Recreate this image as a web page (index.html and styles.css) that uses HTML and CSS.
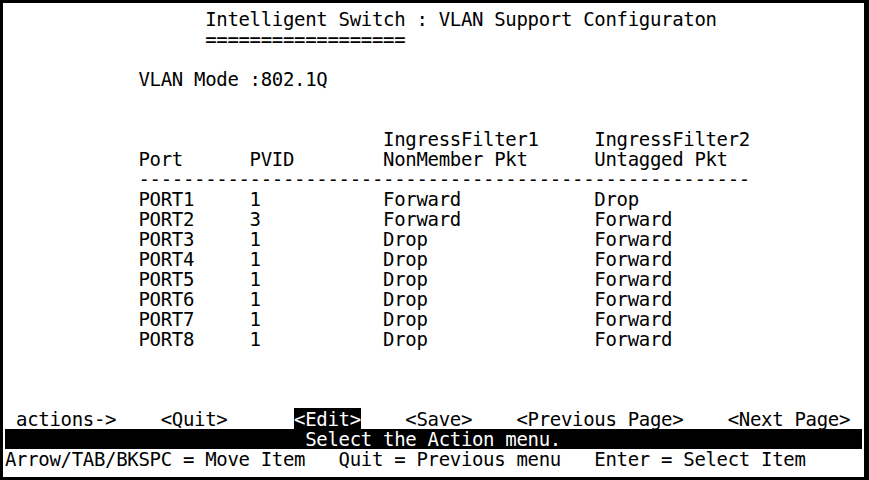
FILE: index.html
```html
<!DOCTYPE html>
<html lang="en">
<head>
<meta charset="utf-8">
<title>Intelligent Switch : VLAN Support Configuraton</title>
<link rel="stylesheet" href="styles.css">
</head>
<body>
<div class="term">
<div class="line">                  Intelligent Switch : VLAN Support Configuraton</div>
<div class="line">                  ==================</div>
<div class="line"> </div>
<div class="line">            VLAN Mode :802.1Q</div>
<div class="line"> </div>
<div class="line"> </div>
<div class="line">                                  IngressFilter1     IngressFilter2</div>
<div class="line">            Port      PVID        NonMember Pkt      Untagged Pkt</div>
<div class="line">            -------------------------------------------------------</div>
<div class="line">            PORT1     1           Forward            Drop</div>
<div class="line">            PORT2     3           Forward            Forward</div>
<div class="line">            PORT3     1           Drop               Forward</div>
<div class="line">            PORT4     1           Drop               Forward</div>
<div class="line">            PORT5     1           Drop               Forward</div>
<div class="line">            PORT6     1           Drop               Forward</div>
<div class="line">            PORT7     1           Drop               Forward</div>
<div class="line">            PORT8     1           Drop               Forward</div>
<div class="line"> </div>
<div class="line"> </div>
<div class="line"> </div>
<div class="line"> actions-&gt;    &lt;Quit&gt;      <span class="sel">&lt;Edit&gt;</span>    &lt;Save&gt;    &lt;Previous Page&gt;    &lt;Next Page&gt;</div>
<div class="line bar">                           Select the Action menu.</div>
<div class="line">Arrow/TAB/BKSPC = Move Item   Quit = Previous menu   Enter = Select Item</div>
</div>
</body>
</html>
```

FILE: styles.css
```css
html, body {
  margin: 0;
  padding: 0;
  background: #ffffff;
}

.term {
  box-sizing: border-box;
  width: 869px;
  height: 480px;
  border-style: solid;
  border-color: #000000;
  border-width: 3px 5px 3px 3px;
  padding: 6px 0 0 2px;
  background: #ffffff;
  color: #000000;
  font-family: "DejaVu Sans Mono", "Liberation Mono", monospace;
  font-size: 19px;
  letter-spacing: -0.32px;
  overflow: hidden;
}

.line {
  height: 20px;
  line-height: 20px;
  white-space: pre;
}

.sel {
  background: #000000;
  color: #ffffff;
}

.bar {
  background: #000000;
  color: #ffffff;
  margin-right: 2px;
}
```
